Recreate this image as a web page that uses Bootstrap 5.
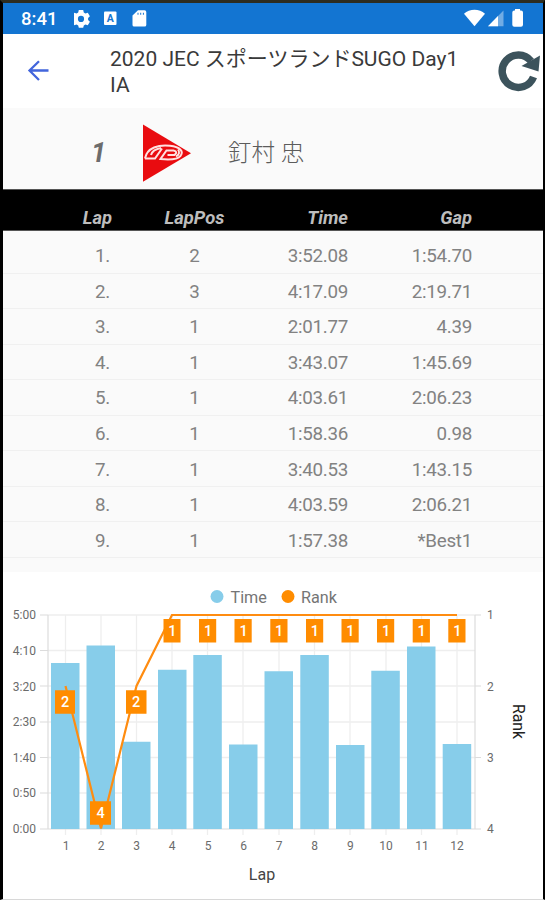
<!DOCTYPE html>
<html lang="ja">
<head>
<meta charset="utf-8">
<meta name="viewport" content="width=device-width, initial-scale=1">
<title>2020 JEC スポーツランドSUGO Day1 IA</title>
<link href="https://cdn.jsdelivr.net/npm/bootstrap@5.3.0/dist/css/bootstrap.min.css" rel="stylesheet">
<style>
body{font-family:Roboto,"Noto Sans CJK JP",sans-serif;background:#000;overflow:hidden}
.device{width:545px;height:900px;border:solid #000;border-width:3px 2px 1px 3px;border-top-color:#2d2c20;border-bottom-color:#d8d8d8;background:#fff}
.status-bar{height:31px;background:#1375d2;color:#fff;padding:2px 15px 0 18px;font-size:18.5px;font-weight:500;line-height:29px}
.status-bar svg{margin-top:-2px}
.status-time{width:53px}
.app-bar{height:74px;background:#fff}
.back-arrow{width:107px;padding:26px 0 0 24px}
.app-title{font-size:21px;line-height:26px;color:#3a3a3a;width:370px;padding-top:12px;margin:0;font-weight:400}
.reload{padding:15px 0 0 15.500px}
.rider{height:81px;background:#fafafa;color:#6c6c6c;padding-top:8px}
.rider-pos{width:139px;padding:2px 0 0 88px;font-size:27px;font-weight:700;font-style:italic}
.rider-name{font-size:23.5px;padding:2px 0 0 36px;font-weight:300;color:#5c5c5c}
.laps{table-layout:fixed;width:540px;background:#fafafa;color:#828282;font-size:18.8px;border-collapse:separate;border-spacing:0}
.laps th{height:42px;background:#000;color:#bdbdbd;font-style:italic;font-weight:700;font-size:18.4px;padding:16px 0 0;line-height:24px;border-top:1px solid #555;border-bottom:1px solid #555;white-space:nowrap}
.lap-head{margin-right:-2px}
.laps td{height:35.55px;padding:3px 0 0;line-height:31px;border-bottom:1px solid #f0f0f0;letter-spacing:-.28px}
.laps tbody tr:first-child td{height:42.5px;padding-top:10px}
.table-foot{height:14px;background:#fafafa}
.grid-line{stroke:#eee;stroke-width:1.3;fill:none}
.axis-line{stroke:#dcdcdc;stroke-width:1.2;fill:none}
.tick-text{font-size:12px;fill:#6b6b6b}
.rank-text{font-size:14.5px;font-weight:500;fill:#fff;text-anchor:middle}
.legend-text{font-size:16.2px;fill:#757575}
.axis-title{font-size:16px;fill:#444}
.axis-title.side{font-size:16px;fill:#222}
</style>
<script src="https://cdn.jsdelivr.net/npm/bootstrap@5.3.0/dist/js/bootstrap.bundle.min.js"></script>
</head>
<body>
<main class="device overflow-hidden">
  <div class="status-bar d-flex align-items-center">
    <span class="status-time">8:41</span>
    <svg width="84" height="31" viewBox="74 3 84 31" fill="#fff">
      <path fill-rule="evenodd" d="M78.8 10h4.4l.6 2.6 1.6.9 2.4-.8 2.1 3.6-1.8 1.7v2l1.8 1.7-2.1 3.6-2.4-.8-1.6.9-.6 2.3h-4.4l-.6-2.3-1.6-.9-2.4.8-2.1-3.6 1.8-1.7v-2l-1.8-1.7 2.1-3.6 2.4.8 1.6-.9zM81 15.8a3.1 3.1 0 1 0 0 6.200 3.100 3.100 0 0 0 0-6.200z"/>
      <rect x="104" y="11.500" width="12.500" height="13.500" rx="1"/>
      <text x="110.200" y="22.200" text-anchor="middle" font-size="10.500" font-weight="700" fill="#1375d2">A</text>
      <path fill-rule="evenodd" d="M138 10.200h6.500q1.800 0 1.800 1.800v13q0 1.600-1.700 1.600h-10.400q-1.700 0-1.700-1.600V15.500zM137.500 12.700v2h1v-2zm2.700 0v2h1v-2zm2.700 0v2h1v-2z"/>
    </svg>
    <svg class="ms-auto" width="64" height="31" viewBox="464 3 64 31" fill="#fff">
      <path d="M464 13.800c5.500-5.400 15.500-5.400 21 0L474.500 26.200z"/>
      <path d="M503.500 10.500v15.800H488z" opacity=".4"/>
      <path d="M498 16v10.300h-10z"/>
      <path d="M515 9h5v1.500h1q2 0 2 2v12.200q0 2-2 2h-6.700q-2 0-2-2V12.500q0-2 2-2h.7z"/>
    </svg>
  </div>

  <header class="app-bar d-flex">
    <a class="back-arrow" href="#" aria-label="Back"><svg class="d-block" width="23" height="22" viewBox="0 0 23 22" fill="none" stroke="#4265dc" stroke-width="2.300"><path d="M21.500 10.500H2.500M12 1.200L2.500 10.500l9.500 9.500"/></svg></a>
    <h1 class="app-title">2020 JEC スポーツランドSUGO Day1<br>IA</h1>
    <div class="reload"><svg class="d-block" width="46" height="44" viewBox="497 49 46 44"><path d="M534.500 77A16.200 16.200 0 1 1 532 61" fill="none" stroke="#3c535c" stroke-width="7.500"/><path d="M541 55.500L539.500 71.500 522.500 66z" fill="#3c535c"/></svg></div>
  </header>

  <section class="rider d-flex align-items-center">
    <div class="rider-pos">1</div>
    <svg width="50" height="58" viewBox="142 124 50 58">
      <path d="M143 124.500L191 153.300 143 181.800z" fill="#e90c10"/>
      <g fill="none" stroke="#ffe1e1" stroke-width="2"><path d="M145 158.500c2-11 14-14 25-12.700 10 1 14 5.500 10.500 10-3 4-12 4-20 3.200l6-8.500h7q5 1 1 4.500h-7"/><path d="M145 158.500h10l7-10M151 155c1-4 5-6 10-7"/><path d="M178 149.500q3 4-2 7"/></g>
    </svg>
    <div class="rider-name">釘村 忠</div>
  </section>

  <table class="laps">
    <colgroup><col style="width:107px"><col style="width:169px"><col style="width:69px"><col style="width:124px"><col></colgroup>
    <thead><tr><th class="text-end"><span class="lap-head">Lap</span></th><th class="text-center">LapPos</th><th class="text-end">Time</th><th class="text-end">Gap</th><th></th></tr></thead>
    <tbody>
      <tr><td class="text-end">1.</td><td class="text-center">2</td><td class="text-end">3:52.08</td><td class="text-end">1:54.70</td><td></td></tr>
      <tr><td class="text-end">2.</td><td class="text-center">3</td><td class="text-end">4:17.09</td><td class="text-end">2:19.71</td><td></td></tr>
      <tr><td class="text-end">3.</td><td class="text-center">1</td><td class="text-end">2:01.77</td><td class="text-end">4.39</td><td></td></tr>
      <tr><td class="text-end">4.</td><td class="text-center">1</td><td class="text-end">3:43.07</td><td class="text-end">1:45.69</td><td></td></tr>
      <tr><td class="text-end">5.</td><td class="text-center">1</td><td class="text-end">4:03.61</td><td class="text-end">2:06.23</td><td></td></tr>
      <tr><td class="text-end">6.</td><td class="text-center">1</td><td class="text-end">1:58.36</td><td class="text-end">0.98</td><td></td></tr>
      <tr><td class="text-end">7.</td><td class="text-center">1</td><td class="text-end">3:40.53</td><td class="text-end">1:43.15</td><td></td></tr>
      <tr><td class="text-end">8.</td><td class="text-center">1</td><td class="text-end">4:03.59</td><td class="text-end">2:06.21</td><td></td></tr>
      <tr><td class="text-end">9.</td><td class="text-center">1</td><td class="text-end">1:57.38</td><td class="text-end">*Best1</td><td></td></tr>
    </tbody>
  </table>
  <div class="table-foot"></div>

  <svg class="d-block" width="540" height="328" viewBox="3 572 540 328">
    <circle cx="217" cy="596.500" r="6.500" fill="#87cdea"/><text class="legend-text" x="230.500" y="603">Time</text>
    <circle cx="288" cy="596.500" r="6.500" fill="#ff8c00"/><text class="legend-text" x="301" y="603">Rank</text>
    <!-- horizontal and vertical grid -->
    <path class="grid-line" d="M48 615H475M48 650.500H475M48 686H475M48 722H475M48 757.500H475M48 793H475"/>
    <path class="grid-line" d="M65.500 615V835M101 615V835M136.500 615V835M172 615V835M207.500 615V835M243 615V835M279 615V835M314.500 615V835M350 615V835M386 615V835M421.500 615V835M457 615V835"/>
    <path class="axis-line" d="M48 615V829H475V615M40 615h8M40 650.500h8M40 686h8M40 722h8M40 757.500h8M40 793h8M40 829h8M475 615h6M475 686h6M475 757.500h6M475 829h6"/>
    <!-- lap times -->
    <path fill="#87cdea" d="M51 663h28.500v166H51zM86.500 645.500H115V829H86.500zM122 741.700h28.500V829H122zM158 669.700h28.500V829H158zM193.300 655h28.500v174h-28.500zM229 744.500h28.500V829H229zM264.500 671.300H293V829h-28.500zM300.300 655h28.500v174h-28.500zM336 745h28.500v84H336zM371.300 670.800h28.500V829h-28.500zM407 646.500h28.500V829H407zM442.700 744h28.500v85h-28.500z"/>
    <!-- rank per lap -->
    <path fill="none" stroke="#ff8c10" stroke-width="2.200" d="M65.500 686L101 828.500 136.500 686 172 615H457"/>
    <path fill="#ff8c00" d="M55 690.300h20v23.500H55zM90 801.300h21v23.500H90zM126 690.300h20.500v23.500H126z"/>
    <path fill="#ff8c00" d="M163.500 619h17v23.500h-17zM199 619h17.200v23.500H199zM234.500 619h17.200v23.500h-17.200zM270.300 619h17.200v23.500h-17.200zM306 619h17.200v23.500H306zM341.500 619h17.200v23.500h-17.200zM377 619h17.200v23.500H377zM412.700 619h17.200v23.500h-17.200zM448.300 619h17.200v23.500h-17.200z"/>
    <g class="rank-text">
      <text x="65" y="707.300">2</text><text x="100.500" y="818">4</text><text x="136" y="707.300">2</text>
      <text x="172.300" y="636.300">1</text><text x="208" y="636.300">1</text><text x="243.500" y="636.300">1</text><text x="279.200" y="636.300">1</text><text x="314.800" y="636.300">1</text><text x="350.300" y="636.300">1</text><text x="386" y="636.300">1</text><text x="421.700" y="636.300">1</text><text x="457.300" y="636.300">1</text>
    </g>
    <g class="tick-text" text-anchor="end">
      <text x="36" y="619.300">5:00</text><text x="36" y="654.800">4:10</text><text x="36" y="690.500">3:20</text><text x="36" y="726.200">2:30</text><text x="36" y="761.700">1:40</text><text x="36" y="797.300">0:50</text><text x="36" y="833">0:00</text>
    </g>
    <g class="tick-text"><text x="487" y="619.300">1</text><text x="487" y="690.500">2</text><text x="487" y="761.700">3</text><text x="487" y="833">4</text></g>
    <g class="tick-text" text-anchor="middle">
      <text x="66" y="849.500">1</text><text x="101" y="849.500">2</text><text x="136.700" y="849.500">3</text><text x="172" y="849.500">4</text><text x="208" y="849.500">5</text><text x="243.500" y="849.500">6</text><text x="279" y="849.500">7</text><text x="314.500" y="849.500">8</text><text x="350.300" y="849.500">9</text><text x="386" y="849.500">10</text><text x="422" y="849.500">11</text><text x="457" y="849.500">12</text>
    </g>
    <text class="axis-title" x="262" y="879.500" text-anchor="middle">Lap</text>
    <text class="axis-title side" transform="translate(513 721.500) rotate(90)" text-anchor="middle" textLength="35" lengthAdjust="spacingAndGlyphs">Rank</text>
  </svg>
</main>
</body>
</html>
